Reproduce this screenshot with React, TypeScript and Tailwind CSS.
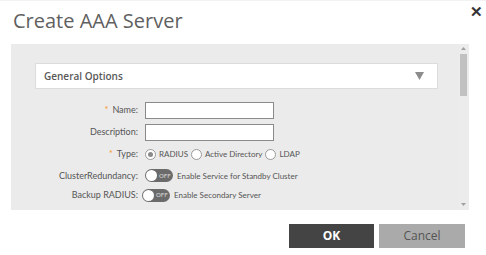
function Toggle() {
  return (
    <div className="relative flex h-[13px] w-[28px] items-center rounded-full bg-[#6b6b6b]">
      <div className="ml-[1px] h-[11px] w-[11px] rounded-full bg-white" />
      <span className="ml-[2px] text-[6px] font-bold leading-none text-[#c4c4c4]">OFF</span>
    </div>
  );
}

function Radio({ checked, label }: { checked?: boolean; label: string }) {
  return (
    <label className="flex items-center gap-[3px]">
      <span className="flex h-[11px] w-[11px] items-center justify-center rounded-full border border-[#9a9a9a] bg-white">
        {checked && <span className="h-[5px] w-[5px] rounded-full bg-[#8a8a8a]" />}
      </span>
      <span>{label}</span>
    </label>
  );
}

function Label({ text, required }: { text: string; required?: boolean }) {
  return (
    <div className="w-[110px] shrink-0 pr-[7px] text-right text-[9px]">
      {required && <span className="mr-[4px] text-[#f7941d]">*</span>}
      {text}
    </div>
  );
}

export default function App() {
  return (
    <div
      className="relative h-[255px] w-[486px] overflow-hidden border-t border-[#f3f3f3] bg-white"
      style={{ fontFamily: "'Open Sans', 'Liberation Sans', sans-serif" }}
    >
      {/* close */}
      <button className="absolute right-[3px] top-[3px] text-[15px] font-bold leading-none text-[#333]">
        ✕
      </button>

      <h1 className="pl-[13px] pt-[7px] text-[20px] leading-[26px] text-[#5f5f5f]">Create AAA Server</h1>

      {/* scroll panel */}
      <div className="ml-[11px] mt-[10px] flex h-[166px] w-[458px] bg-[#ebebeb]">
        <div
          className="flex-1 pl-[24px] pt-[19px] text-[8px] text-[#555]"
          style={{ fontFamily: "Lato, 'Open Sans', sans-serif" }}
        >
          <div className="flex h-[26px] w-[403px] items-center justify-between border border-[#dcdcdc] bg-white pl-[8px] pr-[13px]">
            <span className="text-[10px] font-semibold text-[#585858]" style={{ fontFamily: "'Open Sans', sans-serif" }}>
              General Options
            </span>
            <svg width="9" height="8" viewBox="0 0 9 8">
              <path d="M0 0H9L4.5 8Z" fill="#8c8c8c" />
            </svg>
          </div>

          <div className="mt-[10px] flex flex-col">
            <div className="flex h-[22px] items-center">
              <Label text="Name:" required />
              <input className="h-[17px] w-[129px] border border-[#8a8a8a] bg-white outline-none" />
            </div>
            <div className="flex h-[22px] items-center">
              <Label text="Description:" />
              <input className="h-[17px] w-[129px] border border-[#8a8a8a] bg-white outline-none" />
            </div>
            <div className="flex h-[22px] items-center">
              <Label text="Type:" required />
              <div className="flex items-center gap-[3px]">
                <Radio checked label="RADIUS" />
                <Radio label="Active Directory" />
                <Radio label="LDAP" />
              </div>
            </div>
            <div className="flex h-[21px] items-center">
              <Label text="ClusterRedundancy:" />
              <Toggle />
              <span className="ml-[4px]">Enable Service for Standby Cluster</span>
            </div>
            <div className="flex h-[18px] items-center">
              <div className="w-[107px] shrink-0 pr-[4px] text-right text-[9px]">Backup RADIUS:</div>
              <Toggle />
              <span className="ml-[4px]">Enable Secondary Server</span>
            </div>
          </div>
        </div>

        {/* scrollbar */}
        <div className="flex w-[11px] flex-col items-center bg-[#ececec] pt-[3px]">
          <svg width="5" height="3" viewBox="0 0 5 3">
            <path d="M0 3H5L2.5 0Z" fill="#a0a0a0" />
          </svg>
          <div className="mt-[4px] h-[42px] w-[7px] bg-[#c1c1c1]" />
          <div className="flex-1" />
          <svg width="5" height="3" viewBox="0 0 5 3" className="mb-[4px]">
            <path d="M0 0H5L2.5 3Z" fill="#a0a0a0" />
          </svg>
        </div>
      </div>

      <div className="mr-[21px] mt-[14px] flex justify-end gap-[5px]">
        <button className="h-[24px] w-[85px] bg-[#444] text-[12px] font-bold text-white">OK</button>
        <button className="h-[24px] w-[86px] bg-[#aaa] text-[12px] text-[#555]">Cancel</button>
      </div>
    </div>
  );
}
